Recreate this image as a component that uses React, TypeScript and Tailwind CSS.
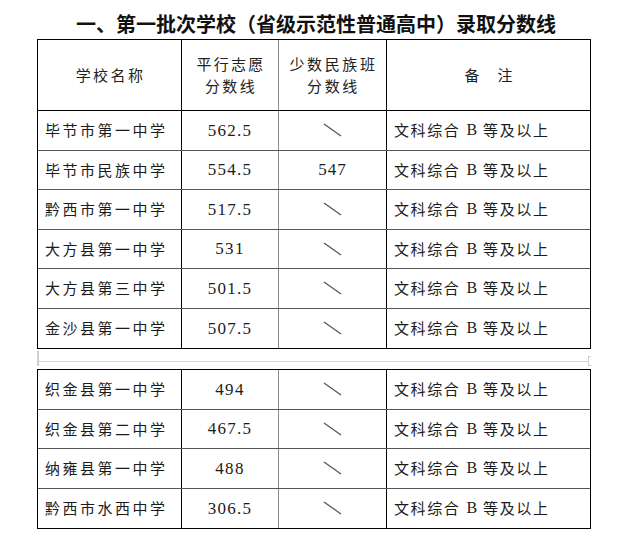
import React from 'react';

type Row = { name: string; score: string; minority?: string };

const firstGroup: Row[] = [
  { name: '毕节市第一中学', score: '562.5' },
  { name: '毕节市民族中学', score: '554.5', minority: '547' },
  { name: '黔西市第一中学', score: '517.5' },
  { name: '大方县第一中学', score: '531' },
  { name: '大方县第三中学', score: '501.5' },
  { name: '金沙县第一中学', score: '507.5' },
];

const secondGroup: Row[] = [
  { name: '织金县第一中学', score: '494' },
  { name: '织金县第二中学', score: '467.5' },
  { name: '纳雍县第一中学', score: '488' },
  { name: '黔西市水西中学', score: '306.5' },
];

const cjk = "font-['Noto_Sans_CJK_SC',sans-serif]";
const cols = 'grid grid-cols-[144px_97px_108px_203px]';

const Slash = () => (
  <svg width="19" height="14" viewBox="0 0 19 14">
    <line x1="1" y1="1" x2="18" y2="13" stroke="#4b5a6b" strokeWidth="1.3" />
  </svg>
);

const Remark = () => (
  <div className={`flex items-center pl-[7px] text-[15px] text-[#1c1c1c] ${cjk}`}>
    <span className="tracking-[1.6px]">文科综合</span>
    <span className="ml-[6px] mr-[6px] font-['Liberation_Serif',serif] text-[16px]">B</span>
    <span className="tracking-[1.6px]">等及以上</span>
  </div>
);

const DataRow = ({ row, last }: { row: Row; last: boolean }) => (
  <div className={`${cols} h-[39.5px] ${last ? '' : 'border-b border-[#555]'}`}>
    <div className={`flex items-center pl-[7px] border-r border-black text-[15px] tracking-[2.5px] text-[#1c1c1c] ${cjk}`}>
      {row.name}
    </div>
    <div className="flex items-center justify-center border-r border-[#8a8a8a] font-['Liberation_Serif',serif] text-[17px] tracking-[1.3px] text-[#1c1c1c]">
      {row.score}
    </div>
    <div className="flex items-center justify-center border-r border-black font-['Liberation_Serif',serif] text-[17px] tracking-[1px] text-[#1c1c1c]">
      {row.minority ? row.minority : <Slash />}
    </div>
    <Remark />
  </div>
);

export default function App() {
  return (
    <div className="w-[638px] h-[551px] bg-white">
      <div className={`h-[39px] pt-[8px] pr-[6px] flex items-center justify-center text-[20px] font-bold leading-none text-[#111] ${cjk}`}>
        一、第一批次学校（省级示范性普通高中）录取分数线
      </div>

      <div className="ml-[37px] w-[554px] border border-black">
        <div className={`${cols} h-[71px] border-b border-black text-[15px] text-[#222] ${cjk}`}>
          <div className="flex items-center justify-center border-r border-black tracking-[2.4px] pl-[2px]">学校名称</div>
          <div className="flex flex-col items-center justify-center border-r border-[#8a8a8a] leading-[22.5px] tracking-[2.3px] pl-[2px]">
            <span>平行志愿</span>
            <span>分数线</span>
          </div>
          <div className="flex flex-col items-center justify-center border-r border-black leading-[22.5px] tracking-[2.6px] pl-[2px]">
            <span>少数民族班</span>
            <span>分数线</span>
          </div>
          <div className="flex items-center justify-center gap-[18px]">
            <span>备</span>
            <span>注</span>
          </div>
        </div>
        {firstGroup.map((r, i) => (
          <DataRow key={r.name} row={r} last={i === firstGroup.length - 1} />
        ))}
      </div>

      <div className="ml-[37px] w-[554px] h-[20px] pt-[2px]">
        <div className="h-[15px] flex items-end border-l-2 border-[#cfcfcf] pb-[4px]">
          <div className="flex-1 h-px bg-[#d9d9d9]" />
          <div className="w-[3px] h-[10px] border border-r-0 border-[#cfcfcf] -mb-[4px]" />
        </div>
      </div>

      <div className="ml-[37px] w-[554px] border border-black">
        {secondGroup.map((r, i) => (
          <DataRow key={r.name} row={r} last={i === secondGroup.length - 1} />
        ))}
      </div>
    </div>
  );
}
